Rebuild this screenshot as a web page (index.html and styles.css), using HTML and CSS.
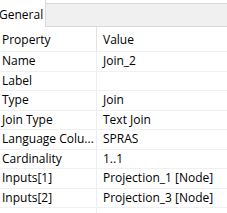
FILE: index.html
```html
<!DOCTYPE html>
<html lang="en">
<head>
  <meta charset="UTF-8" />
  <title>Properties</title>
  <link rel="stylesheet" href="styles.css">
</head>
<body>

  <div class="tabs">
    <div class="tab active">General</div>
    <div class="tab-fill"></div>
  </div>

  <table class="props">
    <tr class="head">
      <td>Property</td>
      <td>Value</td>
    </tr>
    <tr><td>Name</td><td>Join_2</td></tr>
    <tr><td>Label</td><td></td></tr>
    <tr><td>Type</td><td>Join</td></tr>
    <tr><td>Join Type</td><td>Text Join</td></tr>
    <tr><td title="Language Column">Language Colu...</td><td>SPRAS</td></tr>
    <tr><td>Cardinality</td><td>1..1</td></tr>
    <tr><td>Inputs[1]</td><td>Projection_1 [Node]</td></tr>
    <tr><td>Inputs[2]</td><td>Projection_3 [Node]</td></tr>
    <tr class="empty"><td></td><td></td></tr>
  </table>

</body>
</html>
```

FILE: styles.css
```css
body {
  margin: 0;
  font-family: "Open Sans", "Noto Sans", sans-serif;
  font-size: 12px;
  color: #000;
  background: #fff;
  overflow: hidden;
}

.tabs {
  display: flex;
  height: 27px;
}

.tab {
  padding: 6px 2px 0 0;
  margin-left: -1px;
  border-right: 1px solid #d9d9d9;
  background: #fff;
  white-space: nowrap;
}

.tab-fill {
  flex: 1;
  margin-top: 3px;
  background: #f0f0f0;
  border-top: 1px solid #d9d9d9;
  border-bottom: 1px solid #d9d9d9;
}

.props {
  width: 100%;
  border-collapse: collapse;
  table-layout: fixed;
}

.props td {
  height: 18.5px;
  padding: 0 0 0 2px;
  border-bottom: 1px solid #f0f0f0;
  white-space: nowrap;
  overflow: hidden;
  line-height: 18px;
}

.props td:first-child {
  width: 94px;
  border-right: 1px solid #eaeef5;
}

.props td + td {
  padding-left: 6px;
}

.props .head td {
  height: 22px;
  padding-top: 2px;
}

.props .head td:first-child {
  border-right-color: #e3e3e3;
}

.props .empty td {
  height: 6px;
  border-bottom: none;
}
```
